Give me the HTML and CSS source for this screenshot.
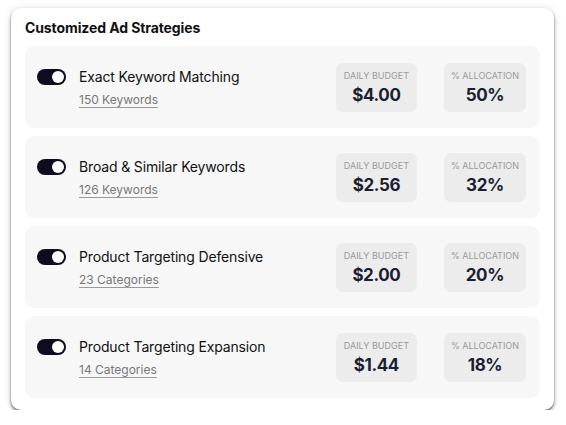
FILE: index.html
```html
<!DOCTYPE html>
<html>
<head>
<meta charset="utf-8">
<link rel="stylesheet" href="styles.css">
</head>
<body>
<div class="page">
  <div class="card">
    <h2 class="card-title">Customized Ad Strategies</h2>
    <div class="rows">
      <div class="row">
        <div class="left">
          <span class="toggle"><span class="knob"></span></span>
          <div class="info">
            <div class="name">Exact Keyword Matching</div>
            <a class="sub">150 Keywords</a>
          </div>
        </div>
        <div class="stats">
          <div class="stat"><div class="label">DAILY BUDGET</div><div class="value">$4.00</div></div>
          <div class="stat"><div class="label">% ALLOCATION</div><div class="value">50%</div></div>
        </div>
      </div>
      <div class="row">
        <div class="left">
          <span class="toggle"><span class="knob"></span></span>
          <div class="info">
            <div class="name">Broad &amp; Similar Keywords</div>
            <a class="sub">126 Keywords</a>
          </div>
        </div>
        <div class="stats">
          <div class="stat"><div class="label">DAILY BUDGET</div><div class="value">$2.56</div></div>
          <div class="stat"><div class="label">% ALLOCATION</div><div class="value">32%</div></div>
        </div>
      </div>
      <div class="row">
        <div class="left">
          <span class="toggle"><span class="knob"></span></span>
          <div class="info">
            <div class="name">Product Targeting Defensive</div>
            <a class="sub">23 Categories</a>
          </div>
        </div>
        <div class="stats">
          <div class="stat"><div class="label">DAILY BUDGET</div><div class="value">$2.00</div></div>
          <div class="stat"><div class="label">% ALLOCATION</div><div class="value">20%</div></div>
        </div>
      </div>
      <div class="row">
        <div class="left">
          <span class="toggle"><span class="knob"></span></span>
          <div class="info">
            <div class="name">Product Targeting Expansion</div>
            <a class="sub">14 Categories</a>
          </div>
        </div>
        <div class="stats">
          <div class="stat"><div class="label">DAILY BUDGET</div><div class="value">$1.44</div></div>
          <div class="stat"><div class="label">% ALLOCATION</div><div class="value">18%</div></div>
        </div>
      </div>
    </div>
  </div>
</div>
</body>
</html>
```

FILE: styles.css
```css
* { box-sizing: border-box; }
html, body { margin: 0; padding: 0; background: #ffffff; }
body { font-family: Inter, "Noto Sans", sans-serif; color: #111111; }
.page { padding: 8px 12px 0 11px; }
.card {
  width: 543px;
  height: 402px;
  background: #ffffff;
  border-radius: 10px;
  padding: 11px 14px 12px 14px;
  box-shadow: 0 2px 3px rgba(0,0,0,0.55), 0 1px 8px rgba(0,0,0,0.14);
}
.card-title {
  margin: 0 0 10px 0;
  font-size: 14px;
  font-weight: 700;
  line-height: 17px;
  letter-spacing: -0.1px;
  color: #111111;
}
.rows { display: flex; flex-direction: column; gap: 8px; }
.row {
  height: 82px;
  background: #f7f7f7;
  border-radius: 9px;
  padding: 0 14px 0 12px;
  display: flex;
  align-items: center;
  justify-content: space-between;
}
.left { display: flex; align-items: flex-start; gap: 13px; }
.toggle {
  position: relative;
  display: block;
  width: 29px;
  height: 16px;
  border-radius: 8px;
  background: #0e0c1e;
  margin-top: 1px;
  flex: none;
}
.knob {
  position: absolute;
  right: 2px;
  top: 2px;
  width: 12px;
  height: 12px;
  border-radius: 50%;
  background: #ffffff;
}
.info { display: flex; flex-direction: column; }
.name { font-size: 14px; line-height: 18px; color: #111111; font-weight: 400; letter-spacing: -0.15px; }
.sub {
  margin-top: 6px;
  font-size: 12px;
  line-height: 15px;
  color: #777777;
  text-decoration: underline;
  text-decoration-color: #999999;
  text-underline-offset: 3px;
  align-self: flex-start;
}
.stats { display: flex; gap: 27px; }
.stat {
  min-width: 81px;
  background: #ececec;
  border-radius: 7px;
  padding: 7px 7px 6px;
  text-align: center;
}
.label { font-size: 9px; line-height: 11px; color: #9a9a9a; margin-bottom: 3px; }
.value { font-size: 17px; line-height: 22px; font-weight: 700; color: #1a1e31; letter-spacing: -0.4px; }
```
